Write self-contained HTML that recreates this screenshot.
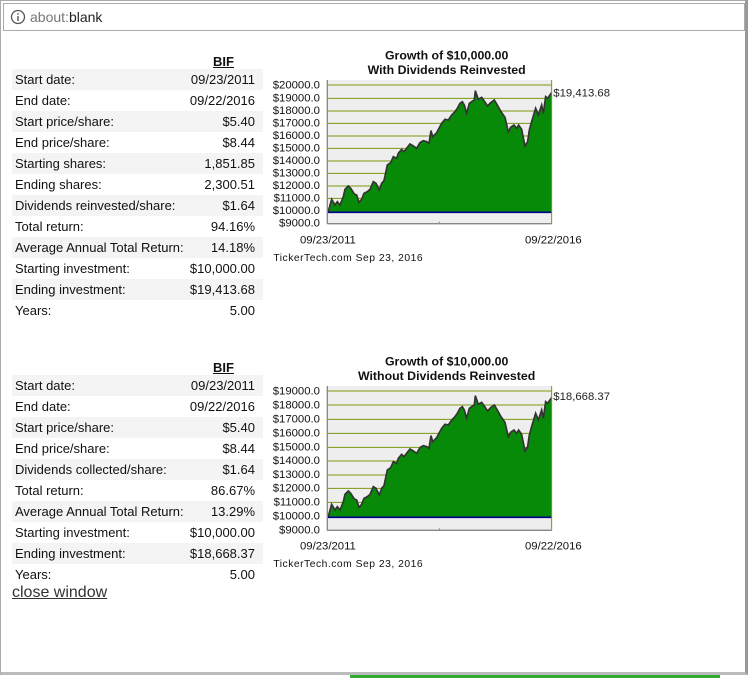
<!DOCTYPE html>
<html><head><style>
body{margin:0;width:751px;height:678px;background:#fff;position:relative;overflow:hidden;font-family:"Liberation Sans",Arial,sans-serif;}
.frame{position:absolute;left:0;top:0;width:744px;height:671px;border:1px solid #aaa;border-right:3px solid #999;border-bottom:3px solid #bbb;background:#fff}
.url{position:absolute;left:3px;top:3px;width:740px;height:26px;border:1px solid #aaa;background:#fff;font-size:14px;line-height:26px}
table{position:absolute;left:12px;width:251px;border-collapse:collapse;font-size:13px;color:#111}
td{height:21px;padding:0 0 0 3px;white-space:nowrap}
td.r{text-align:right;padding:0 8px 0 0}
tr.g td{background:#f4f4f4}
th{height:22px;font-size:13px;font-weight:bold;text-decoration:underline;text-align:right;padding:0 29px 0 0;vertical-align:bottom}
.cw{position:absolute;left:12px;top:584px;font-size:16px;color:#333;text-decoration:underline}
</style></head><body>
<div class="frame"></div>
<div class="url"><svg width="16" height="16" style="position:absolute;left:6px;top:5px"><circle cx="8" cy="8" r="6.5" fill="none" stroke="#555" stroke-width="1.3"/><rect x="7.3" y="7" width="1.4" height="5" fill="#555"/><rect x="7.3" y="4.2" width="1.4" height="1.5" fill="#555"/></svg><span style="position:absolute;left:26px;top:0;color:#777">about:<span style="color:#222">blank</span></span></div>
<div style="position:absolute;left:350px;top:675px;width:370px;height:3px;background:#3a3"></div>

<table style="top:47px">
<tr><td></td><th>BIF</th></tr>
<tr class="g"><td>Start date:</td><td class="r">09/23/2011</td></tr>
<tr><td>End date:</td><td class="r">09/22/2016</td></tr>
<tr class="g"><td>Start price/share:</td><td class="r">$5.40</td></tr>
<tr><td>End price/share:</td><td class="r">$8.44</td></tr>
<tr class="g"><td>Starting shares:</td><td class="r">1,851.85</td></tr>
<tr><td>Ending shares:</td><td class="r">2,300.51</td></tr>
<tr class="g"><td>Dividends reinvested/share:</td><td class="r">$1.64</td></tr>
<tr><td>Total return:</td><td class="r">94.16%</td></tr>
<tr class="g"><td>Average Annual Total Return:</td><td class="r">14.18%</td></tr>
<tr><td>Starting investment:</td><td class="r">$10,000.00</td></tr>
<tr class="g"><td>Ending investment:</td><td class="r">$19,413.68</td></tr>
<tr><td>Years:</td><td class="r">5.00</td></tr>
</table>

<table style="top:353px">
<tr><td></td><th>BIF</th></tr>
<tr class="g"><td>Start date:</td><td class="r">09/23/2011</td></tr>
<tr><td>End date:</td><td class="r">09/22/2016</td></tr>
<tr class="g"><td>Start price/share:</td><td class="r">$5.40</td></tr>
<tr><td>End price/share:</td><td class="r">$8.44</td></tr>
<tr class="g"><td>Dividends collected/share:</td><td class="r">$1.64</td></tr>
<tr><td>Total return:</td><td class="r">86.67%</td></tr>
<tr class="g"><td>Average Annual Total Return:</td><td class="r">13.29%</td></tr>
<tr><td>Starting investment:</td><td class="r">$10,000.00</td></tr>
<tr class="g"><td>Ending investment:</td><td class="r">$18,668.37</td></tr>
<tr><td>Years:</td><td class="r">5.00</td></tr>
</table>
<div class="cw">close window</div>

<svg width="751" height="678" style="position:absolute;left:0;top:0" font-family="Liberation Sans,Arial,sans-serif">
<defs>
<path id="p" d="M204,517 L215,478 L225,495 L232,485 L240,495 L250,470 L255,448 L265,438 L272,445 L283,462 L290,465 L297,487 L305,478 L312,460 L322,455 L330,448 L340,425 L348,430 L358,450 L365,430 L372,422 L382,375 L392,368 L400,350 L410,355 L415,340 L425,328 L432,335 L440,325 L450,312 L460,318 L470,325 L480,308 L490,302 L500,305 L507,310 L513,272 L518,290 L530,278 L545,250 L555,238 L565,240 L575,225 L585,215 L592,205 L600,190 L607,185 L613,195 L620,220 L628,190 L635,185 L643,180 L646,152 L655,178 L665,172 L672,182 L683,198 L692,188 L703,180 L712,195 L723,215 L735,232 L745,275 L748,270 L752,262 L762,255 L770,265 L776,255 L785,268 L795,318 L803,305 L808,270 L815,245 L827,205 L835,225 L845,195 L850,220 L857,170 L863,175 L870,165 L875,158"/>
<path id="f" d="M204,517 L215,478 L225,495 L232,485 L240,495 L250,470 L255,448 L265,438 L272,445 L283,462 L290,465 L297,487 L305,478 L312,460 L322,455 L330,448 L340,425 L348,430 L358,450 L365,430 L372,422 L382,375 L392,368 L400,350 L410,355 L415,340 L425,328 L432,335 L440,325 L450,312 L460,318 L470,325 L480,308 L490,302 L500,305 L507,310 L513,272 L518,290 L530,278 L545,250 L555,238 L565,240 L575,225 L585,215 L592,205 L600,190 L607,185 L613,195 L620,220 L628,190 L635,185 L643,180 L646,152 L655,178 L665,172 L672,182 L683,198 L692,188 L703,180 L712,195 L723,215 L735,232 L745,275 L748,270 L752,262 L762,255 L770,265 L776,255 L785,268 L795,318 L803,305 L808,270 L815,245 L827,205 L835,225 L845,195 L850,220 L857,170 L863,175 L870,165 L875,158 L875,517 Z"/>
</defs>
<g transform="translate(260,40) scale(0.3333)">
<text x="560" y="58" font-size="37" font-weight="bold" text-anchor="middle" fill="#111">Growth of $10,000.00</text>
<text x="560" y="102" font-size="37" font-weight="bold" text-anchor="middle" fill="#111">With Dividends Reinvested</text>
<rect x="202" y="120" width="673" height="430" fill="#eee"/>
<g stroke="#7a9a10" stroke-width="3">
<line x1="202" x2="875" y1="135" y2="135"/><line x1="202" x2="875" y1="175" y2="175"/><line x1="202" x2="875" y1="213" y2="213"/><line x1="202" x2="875" y1="250" y2="250"/><line x1="202" x2="875" y1="288" y2="288"/><line x1="202" x2="875" y1="325" y2="325"/><line x1="202" x2="875" y1="363" y2="363"/><line x1="202" x2="875" y1="400" y2="400"/><line x1="202" x2="875" y1="438" y2="438"/><line x1="202" x2="875" y1="475" y2="475"/></g>
<use href="#f" fill="#078a07"/>
<use href="#p" fill="none" stroke="#333" stroke-width="5"/>
<line x1="202" x2="875" y1="517" y2="517" stroke="#00008b" stroke-width="5"/>
<line x1="202" x2="202" y1="120" y2="552" stroke="#888" stroke-width="4"/>
<line x1="875" x2="875" y1="120" y2="552" stroke="#7a9a10" stroke-width="3"/>
<line x1="202" x2="875" y1="551" y2="551" stroke="#888" stroke-width="4"/>
<line x1="538" x2="538" y1="545" y2="551" stroke="#888" stroke-width="3"/>
<g font-size="34" text-anchor="end" fill="#111">
<text x="180" y="146">$20000.0</text><text x="180" y="184">$19000.0</text><text x="180" y="222">$18000.0</text><text x="180" y="259">$17000.0</text><text x="180" y="297">$16000.0</text><text x="180" y="334">$15000.0</text><text x="180" y="372">$14000.0</text><text x="180" y="410">$13000.0</text><text x="180" y="447">$12000.0</text><text x="180" y="484">$11000.0</text><text x="180" y="522">$10000.0</text><text x="180" y="560">$9000.0</text></g>
<text x="880" y="169" font-size="34" fill="#222">$19,413.68</text>
<text x="120" y="610" font-size="34" fill="#111">09/23/2011</text>
<text x="795" y="610" font-size="34" fill="#111">09/22/2016</text>
<text x="40" y="663" font-size="31" fill="#111" letter-spacing="1.5">TickerTech.com  Sep 23, 2016</text>
</g>

<g transform="translate(260,350) scale(0.3333)">
<text x="560" y="46" font-size="37" font-weight="bold" text-anchor="middle" fill="#111">Growth of $10,000.00</text>
<text x="560" y="90" font-size="37" font-weight="bold" text-anchor="middle" fill="#111">Without Dividends Reinvested</text>
<rect x="202" y="108" width="673" height="432" fill="#eee"/>
<g stroke="#7a9a10" stroke-width="3">
<line x1="202" x2="875" y1="123" y2="123"/><line x1="202" x2="875" y1="165" y2="165"/><line x1="202" x2="875" y1="208" y2="208"/><line x1="202" x2="875" y1="250" y2="250"/><line x1="202" x2="875" y1="292" y2="292"/><line x1="202" x2="875" y1="333" y2="333"/><line x1="202" x2="875" y1="375" y2="375"/><line x1="202" x2="875" y1="415" y2="415"/><line x1="202" x2="875" y1="457" y2="457"/></g>
<g transform="translate(0,-15)">
<use href="#f" fill="#078a07"/>
<use href="#p" fill="none" stroke="#333" stroke-width="5"/>
</g>
<line x1="202" x2="875" y1="502" y2="502" stroke="#00008b" stroke-width="5"/>
<line x1="202" x2="202" y1="108" y2="542" stroke="#888" stroke-width="4"/>
<line x1="875" x2="875" y1="108" y2="542" stroke="#7a9a10" stroke-width="3"/>
<line x1="202" x2="875" y1="541" y2="541" stroke="#888" stroke-width="4"/>
<line x1="538" x2="538" y1="535" y2="541" stroke="#888" stroke-width="3"/>
<g font-size="34" text-anchor="end" fill="#111">
<text x="180" y="134">$19000.0</text><text x="180" y="175">$18000.0</text><text x="180" y="217">$17000.0</text><text x="180" y="259">$16000.0</text><text x="180" y="301">$15000.0</text><text x="180" y="342">$14000.0</text><text x="180" y="384">$13000.0</text><text x="180" y="425">$12000.0</text><text x="180" y="467">$11000.0</text><text x="180" y="508">$10000.0</text><text x="180" y="550">$9000.0</text></g>
<text x="880" y="150" font-size="34" fill="#222">$18,668.37</text>
<text x="120" y="598" font-size="34" fill="#111">09/23/2011</text>
<text x="795" y="598" font-size="34" fill="#111">09/22/2016</text>
<text x="40" y="651" font-size="31" fill="#111" letter-spacing="1.5">TickerTech.com  Sep 23, 2016</text>
</g>
</svg>
</body></html>
